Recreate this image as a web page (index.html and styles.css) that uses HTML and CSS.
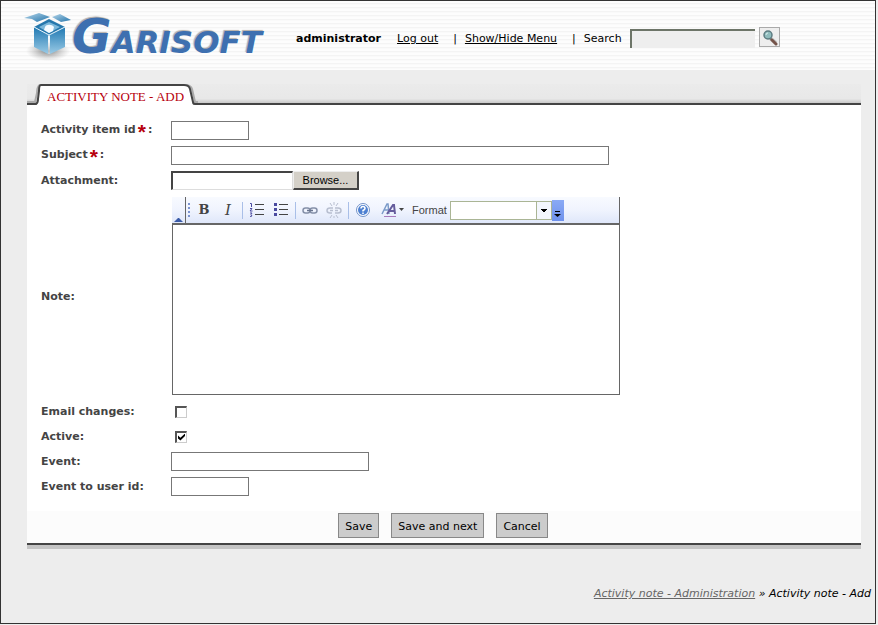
FILE: index.html
```html
<!DOCTYPE html>
<html lang="en">
<head>
<meta charset="utf-8">
<title>Activity note - Add</title>
<link rel="stylesheet" href="styles.css">
</head>
<body>
<div class="page">
  <header class="header">
    <a class="logo" href="#" aria-label="Garisoft">
      <svg class="logo-box" width="48" height="50" viewBox="0 0 48 50" aria-hidden="true">
        <defs>
          <linearGradient id="flap" x1="0" y1="0" x2="1" y2="1"><stop offset="0" stop-color="#b5d6ea"/><stop offset="1" stop-color="#2273aa"/></linearGradient>
          <linearGradient id="face" x1="0" y1="0" x2="0" y2="1"><stop offset="0" stop-color="#1f78b2"/><stop offset="1" stop-color="#9bcbe6"/></linearGradient>
          <radialGradient id="ground"><stop offset="0" stop-color="#555" stop-opacity=".75"/><stop offset="1" stop-color="#999" stop-opacity="0"/></radialGradient>
        </defs>
        <ellipse cx="24" cy="39" rx="22" ry="10" fill="url(#ground)"/>
        <path d="M0 6L15 1L26 5L13 10L8 7Z" fill="url(#flap)"/>
        <path d="M28 5L36 2L47 8L37 10Z" fill="url(#flap)"/>
        <path d="M10 15L25 7L41 15L25 24Z" fill="#2678ad"/>
        <path d="M15 15L25 10L36 15L25 21Z" fill="#7db9db"/>
        <path d="M21 15C22 12 28 12 30 15L29 19L25 21L20 18Z" fill="#f4fbff"/>
        <path d="M10 15L24 23V42L10 35Z" fill="url(#face)"/>
        <path d="M26 23L41 15V35L26 42Z" fill="url(#face)"/>
        <path d="M10 15L25 23L41 15M25 23V42" fill="none" stroke="#e8f5fc"/>
      </svg>
      <span class="wordmark"><span class="wordmark-initial">G</span>ARISOFT</span>
    </a>
    <nav class="menu">
      <strong class="user">administrator</strong>
      <a href="#">Log out</a>
      <span class="bar">|</span>
      <a href="#">Show/Hide Menu</a>
      <span class="bar">|</span>
    </nav>
    <form class="search">
      <label for="search">Search</label>
      <input id="search" type="text">
      <button type="button" aria-label="Search">
        <svg width="17" height="17" viewBox="0 0 17 17" aria-hidden="true">
          <path d="M9 9L15 14" stroke="#c9c9c9" stroke-width="4"/>
          <path d="M9 9L11 11" stroke="#777" stroke-width="2"/>
          <path d="M11 11L15 15" stroke="#75544a" stroke-width="3" stroke-linecap="round"/>
          <circle cx="7" cy="6" r="4" fill="#8fbcbd" stroke="#5c7b80" stroke-width="1.5"/>
          <path d="M5 6Q5 4 7 4" fill="none" stroke="#d8eeee"/>
        </svg>
      </button>
    </form>
  </header>

  <main class="content">
    <div class="tabs">
      <svg class="tab-edge" width="14" height="21" viewBox="0 0 14 21" aria-hidden="true">
        <path d="M9 20Q11 19 11 15L12 8Q12 2 14 1V21H9Z" fill="#fff"/>
        <path d="M0 18H8L10 9Q10 2 14 0" fill="none" stroke="#aaa" stroke-width="2"/>
        <path d="M0 20H9Q11 19 11 15L12 7Q12 1 14 1" fill="none" stroke="#444" stroke-width="2"/>
      </svg>
      <h1 class="tab">ACTIVITY NOTE - ADD</h1>
      <svg class="tab-edge" width="14" height="21" viewBox="0 0 14 21" aria-hidden="true">
        <path d="M0 1Q5 1 6 5L9 20V21H0Z" fill="#fff"/>
        <path d="M3 1Q7 2 8 5L11 18H14" fill="none" stroke="#aaa" stroke-width="2"/>
        <path d="M0 1Q5 1 6 5L9 18Q9 20 11 20H14" fill="none" stroke="#444" stroke-width="2"/>
      </svg>
      <div class="tab-rest"></div>
    </div>

    <form class="panel">
      <div class="fields">
        <label for="item">Activity item id<span class="required">*</span><span class="colon">:</span></label>
        <div><input class="field short" id="item" type="text"></div>
        <label for="subject">Subject<span class="required">*</span><span class="colon">:</span></label>
        <div><input class="field long" id="subject" type="text"></div>
        <label for="file">Attachment:</label>
        <div class="file">
          <input id="file" type="text"><button type="button">Browse...</button>
        </div>
        <label for="note">Note:</label>
        <div class="editor">
          <div class="toolbar">
            <button class="collapse" type="button" aria-label="Collapse toolbar">
              <svg width="9" height="5" viewBox="0 0 9 5"><path d="M0 4L4 0H5L9 4Z" fill="#3a5ba8"/></svg>
            </button>
            <span class="handle"></span>
            <button class="tool bold" type="button">B</button>
            <button class="tool italic" type="button">I</button>
            <span class="sep"></span>
            <button class="tool" type="button" aria-label="Numbered list">
              <svg width="16" height="16" viewBox="0 0 16 16"><path d="M6 2.500H15M6 7.500H15M6 12.500H15" stroke="#444"/><path d="M1 1.500H2.500V5M1 6.500H3L1 9H3.500M1 11H3L2 12.500L3 14L1 14.500" fill="none" stroke="#4a4aa0"/></svg>
            </button>
            <button class="tool" type="button" aria-label="Bulleted list">
              <svg width="16" height="16" viewBox="0 0 16 16"><path d="M6 2.500H15M6 7.500H15M6 12.500H15" stroke="#444"/><path d="M1 1H4V4H1ZM1 6H4V9H1ZM1 11H4V14H1Z" fill="#4a4aa0"/></svg>
            </button>
            <span class="sep"></span>
            <button class="tool" type="button" aria-label="Insert link">
              <svg width="16" height="16" viewBox="0 0 16 16" fill="none" stroke="#8590a8" stroke-width="1.500"><rect x="1" y="6" width="7" height="5" rx="2.500"/><rect x="8" y="6" width="7" height="5" rx="2.500"/><path d="M5 8.500H11" stroke="#69758f"/></svg>
            </button>
            <button class="tool" type="button" aria-label="Remove link">
              <svg width="16" height="16" viewBox="0 0 16 16" fill="none" stroke="#b8bfd0" stroke-width="1.500"><path d="M7 6H4Q1 6 1 8.500T4 11H6M9 6H12Q15 6 15 8.500T12 11H9M4 8.500H7M9 8.500H12"/><path d="M4 1L6 4M8 0V3M12 1L10 4M4 16L6 13M8 16V14M12 16L10 13" stroke-width="1"/></svg>
            </button>
            <span class="sep"></span>
            <button class="tool" type="button" aria-label="Help">
              <svg width="16" height="16" viewBox="0 0 16 16"><circle cx="8" cy="8" r="6.500" fill="#fff" stroke="#7292c9"/><circle cx="8" cy="8" r="5" fill="#4d80d1"/><path d="M6 6.500Q6 4.500 8 4.500T10 6.500Q10 7.500 8 8.500V9.500M8 10.500V12" fill="none" stroke="#fff" stroke-width="1.500"/></svg>
            </button>
            <button class="tool style" type="button" aria-label="Text colour">
              <svg width="25" height="16" viewBox="0 0 25 16" fill="none"><path d="M1 12L6 2H7L8 12M3 8H8" stroke="#7b9bc9" stroke-width="1.500"/><path d="M6 12L12 3H13L14 12M8 9H14" stroke="#655c9c" stroke-width="2"/><path d="M3 14.500H15" stroke="#a879bc"/><path d="M18 6H23L20.500 9Z" fill="#444"/></svg>
            </button>
            <label class="format-label" for="format">Format</label>
            <select class="format" id="format"><option></option></select>
            <button class="more" type="button" aria-label="More tools">
              <svg width="7" height="8" viewBox="0 0 7 8"><path d="M1 1.500H6" stroke="#000"/><path d="M0 4H7L3.500 7Z"/></svg>
            </button>
          </div>
          <textarea id="note"></textarea>
        </div>
        <label for="email">Email changes:</label>
        <div><input class="check" id="email" type="checkbox"></div>
        <label for="active">Active:</label>
        <div><input class="check" id="active" type="checkbox" checked></div>
        <label for="event">Event:</label>
        <div><input class="field medium" id="event" type="text"></div>
        <label for="user">Event to user id:</label>
        <div><input class="field short" id="user" type="text"></div>
      </div>
      <div class="actions">
        <button type="button">Save</button>
        <button type="button">Save and next</button>
        <button type="button">Cancel</button>
      </div>
    </form>
  </main>

  <footer class="crumbs"><a href="#">Activity note - Administration</a> » Activity note - Add</footer>
</div>
</body>
</html>
```
FILE: styles.css
```css
* { box-sizing: border-box; }

body {
  margin: 0;
  padding-right: 2px;
  background: #eee;
  color: #000;
  font: 11px/15px "DejaVu Sans", sans-serif;
}

input, button, select, textarea {
  margin: 0;
  padding: 0;
  border-radius: 0;
  font: inherit;
  color: inherit;
}

svg { display: block; }
a { color: inherit; }

.page {
  border: 1px solid #333;
  background: #ededed;
}

/* Header */
.header {
  display: flex;
  align-items: center;
  height: 69px;
  padding: 6px 0 0 23px;
  background: repeating-linear-gradient(#fdfdfd 0 2px, #f4f4f4 2px 3px, #fafafa 3px 4px);
}

.logo {
  display: flex;
  align-items: center;
  flex: none;
  width: 272px;
  text-decoration: none;
}

.logo-box { flex: none; margin-bottom: 4px; }

.wordmark {
  color: #3e70b0;
  font: italic bold 31px/40px "DejaVu Sans", sans-serif;
  text-shadow: -1px -1px 1px #b5afa8;
}

.wordmark-initial { font-size: 48px; }

.menu, .search {
  display: flex;
  align-items: center;
  flex: none;
}

.user { margin-right: 16px; }
.bar { margin: 0 8px 0 15px; }

.search input {
  width: 125px;
  height: 19px;
  margin: 0 4px 0 8px;
  border: solid #6d7568;
  border-width: 2px 0 0 2px;
  background: #eee;
}

.search button {
  width: 21px;
  height: 20px;
  margin-bottom: 4px;
  padding: 1px;
  border: 1px solid #aaa;
  background: #eee;
}

/* Tab strip */
.content { padding: 14px 14px 0 26px; }

.tabs {
  display: flex;
  height: 21px;
  background: linear-gradient(#ebebeb, #e8e8e8 70%, #bbb);
}

.tab-edge { flex: none; }

.tab {
  margin: 0;
  padding: 0 0 0 6px;
  border-top: 2px solid #444;
  background: #fff;
  color: #b7000d;
  font: 13px/22px "Liberation Serif", serif;
  white-space: nowrap;
}

.tab-rest {
  flex: 1;
  border-bottom: 2px solid #444;
}

/* Form panel */
.panel {
  border-bottom: 2px solid #444;
  background: #fff;
  box-shadow: 0 4px 0 #c4c4c4;
}

.fields {
  display: grid;
  grid-template-columns: 130px 1fr;
  grid-template-rows: repeat(3, 25px) auto;
  grid-auto-rows: 25px;
  align-items: center;
  padding: 13px 14px 12px;
}

.fields > label {
  color: #444;
  font-weight: bold;
}

.fields > div {
  display: flex;
  align-items: center;
}

.required {
  margin: 0 2px;
  color: #b7000d;
  font: bold 21px/15px "Liberation Sans", sans-serif;
  vertical-align: -6px;
}

.field {
  height: 19px;
  border: 1px solid #777;
  background: #fff;
}

.short { width: 78px; }
.medium { width: 198px; }
.long { width: 438px; }

.file input {
  width: 122px;
  height: 19px;
  border: 2px solid #444;
  border-right: 1px solid #ddd;
  border-bottom: 1px solid #ddd;
  background: #fff;
}

.file button {
  width: 66px;
  height: 19px;
  border: 1px solid #eee;
  border-right: 2px solid #444;
  border-bottom: 2px solid #444;
  background: #d4d0c8;
  font-family: "Liberation Sans", sans-serif;
}

.check {
  appearance: none;
  width: 12px;
  height: 12px;
  margin-left: 4px;
  border: 1px solid #ccc;
  border-top: 2px solid #555;
  border-left: 2px solid #555;
  background: #fff;
}

.check:checked::before {
  content: "";
  display: block;
  width: 7px;
  height: 7px;
  margin: 1px;
  background: #000;
  clip-path: polygon(0 30%, 35% 60%, 100% 0, 100% 35%, 35% 100%, 0 70%);
}

/* Rich text editor */
.fields > .editor {
  display: block;
  width: 448px;
  margin: 4px 0 4px 1px;
}

.toolbar {
  display: flex;
  align-items: center;
  height: 26px;
  border-right: 1px solid #666;
  background: linear-gradient(#f8faff, #f0f4fe 50%, #dfe7fa);
}

.toolbar button {
  display: flex;
  align-items: center;
  justify-content: center;
  flex: none;
  border: 0;
  background: none;
}

.toolbar .collapse {
  align-self: stretch;
  align-items: flex-end;
  width: 14px;
  border-right: 1px solid #666;
}

.handle {
  width: 2px;
  height: 15px;
  margin: 0 2px;
  background: repeating-linear-gradient(#7c94d0 0 2px, transparent 2px 4px);
}

.toolbar .tool {
  width: 24px;
  height: 22px;
  color: #444;
}

.toolbar .style { width: 36px; }
.toolbar .bold { font: bold 13px/22px "DejaVu Serif", serif; }
.toolbar .italic { font: italic 15px/22px "DejaVu Serif", serif; }

.sep {
  width: 1px;
  height: 17px;
  margin: 0 2px;
  background: #a9bfe8;
}

.format-label {
  margin: 0 3px 0 1px;
  color: #444;
  font-family: "Liberation Sans", sans-serif;
}

.format {
  appearance: none;
  width: 102px;
  height: 19px;
  border: 1px solid #aab595;
  background:
    conic-gradient(from -45deg at 50% 100%, #000 90deg, transparent 0) right 4px top 7px / 6px 3px no-repeat,
    linear-gradient(90deg, #aab595 1px, #f3f6fd 1px) right / 15px 100% no-repeat,
    #fff;
}

.toolbar .more {
  width: 12px;
  height: 21px;
  padding-top: 7px;
  background: linear-gradient(#8aaaf5, #6e91ec);
}

.editor textarea {
  display: block;
  width: 100%;
  height: 172px;
  border: 1px solid #666;
  border-top-width: 2px;
  background: #fff;
  resize: none;
}

/* Buttons and breadcrumb */
.actions {
  display: flex;
  justify-content: center;
  gap: 12px;
  padding: 2px 2px 5px 0;
  background: #fcfcfc;
}

.actions button {
  height: 25px;
  padding: 2px 6px 0;
  border: 1px solid #888;
  background: #ccc;
}

.crumbs {
  padding: 41px 4px 22px;
  font-style: italic;
  text-align: right;
}

.crumbs a { color: #666; }
```
